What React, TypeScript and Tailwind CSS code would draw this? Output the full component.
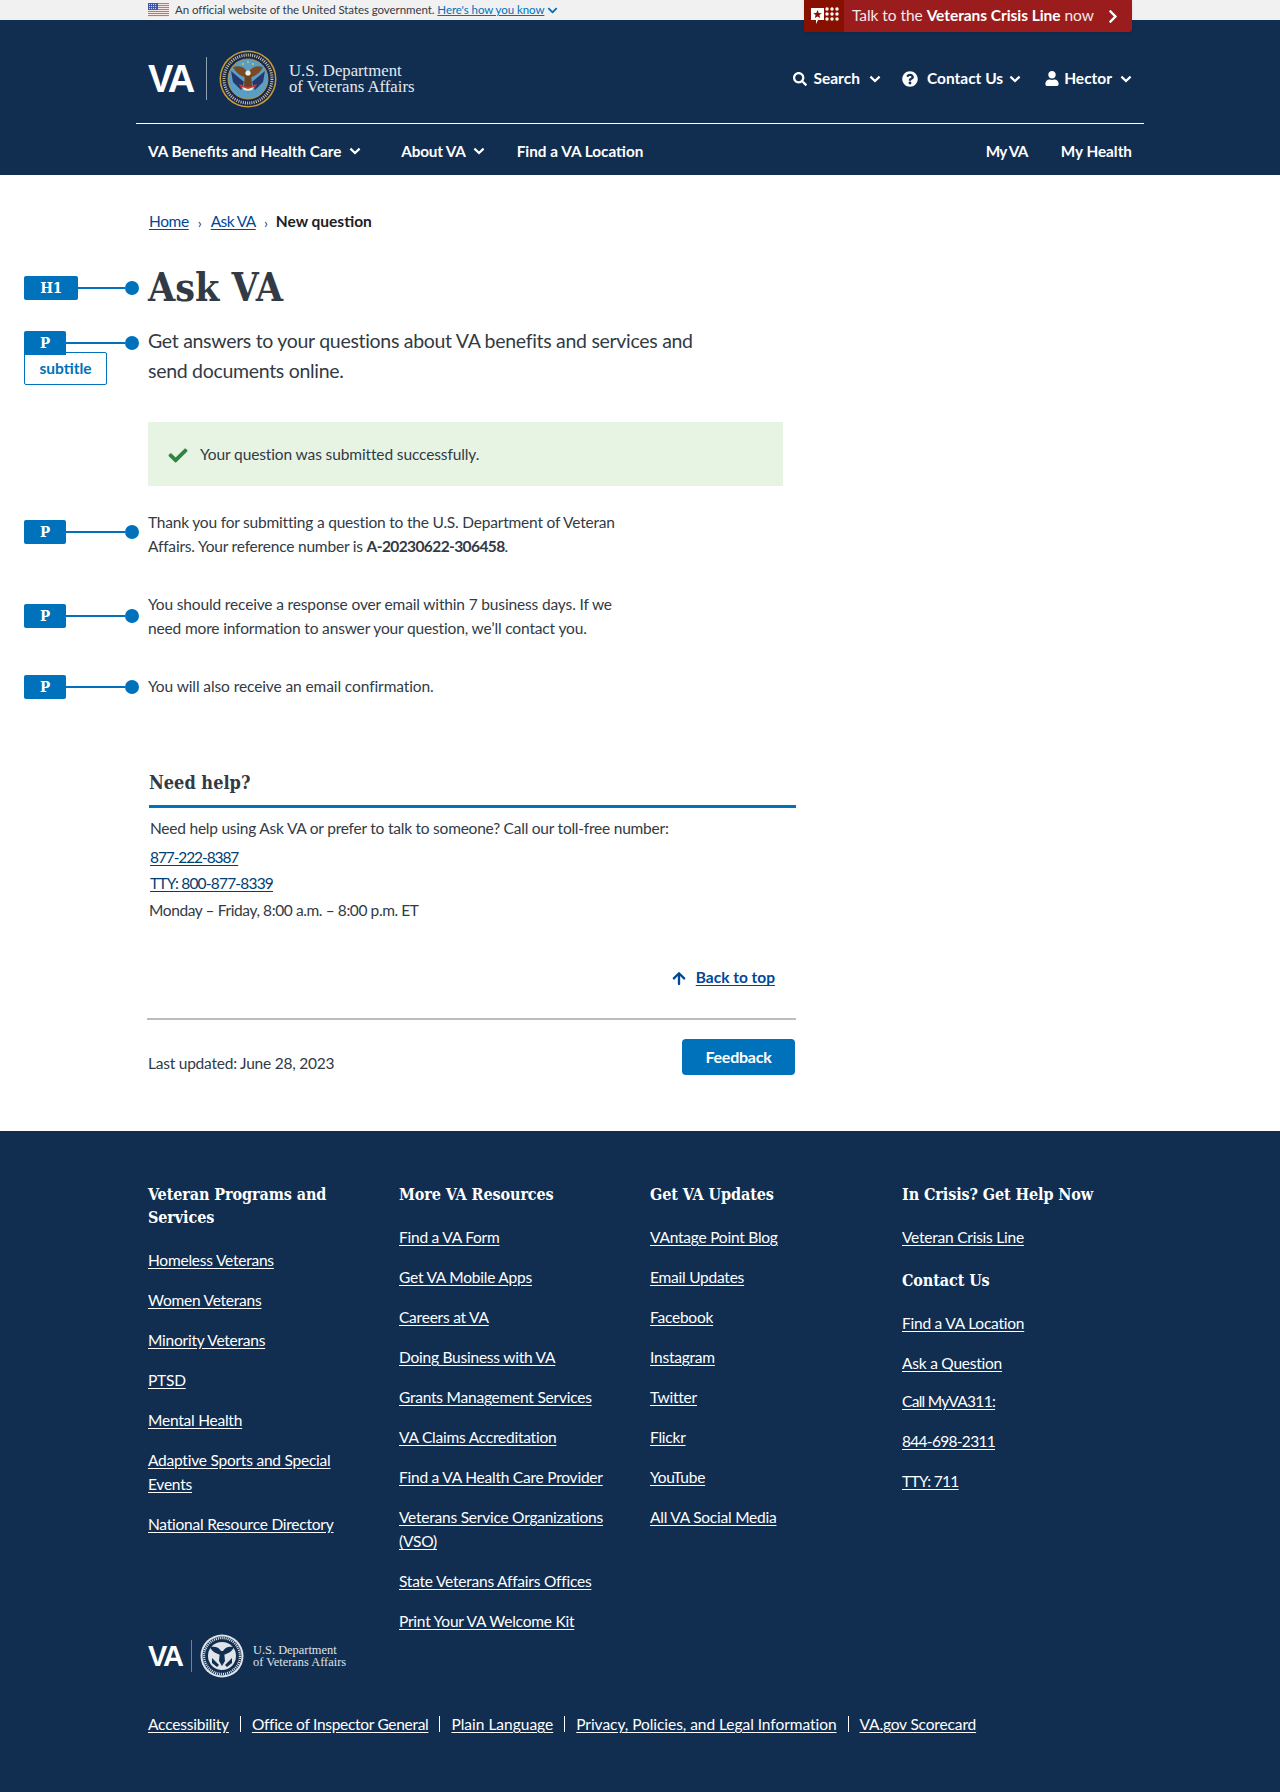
import React from "react";
import { FaChevronDown, FaChevronRight, FaQuestionCircle, FaUser, FaCheck, FaSearch, FaArrowUp } from "react-icons/fa";

const sans = "font-['Lato','Liberation_Sans',sans-serif]";
const serif = "font-['DejaVu_Serif_Condensed','DejaVu_Serif',serif]";

function Flag() {
  return (
    <svg width="21" height="14" viewBox="0 0 21 14" className="block">
      <rect width="21" height="14" fill="#f4f4f4" />
      {[0, 2, 4, 6, 8, 10, 12].map((y) => (
        <rect key={y} y={y} width="21" height="1.1" fill="#e8694f" />
      ))}
      <rect width="10" height="7" fill="#3f57a6" />
      {[1.5, 3.5, 5.5].map((y) =>
        [1.5, 3.5, 5.5, 7.5].map((x) => <circle key={x + "-" + y} cx={x} cy={y} r="0.5" fill="#fff" />)
      )}
    </svg>
  );
}

function Seal({ size }: { size: number }) {
  return (
    <svg width={size} height={size} viewBox="0 0 58 58" className="block shrink-0">
      <circle cx="29" cy="29" r="28.5" fill="#c79a35" />
      <circle cx="29" cy="29" r="27" fill="#1b2a4c" />
      <circle cx="29" cy="29" r="20" fill="#5b9ec4" stroke="#c79a35" strokeWidth="0.8" />
      <path d="M14 32 L12 21 L25 32 L22 40 Z" fill="#24386e" />
      <path d="M44 32 L46 21 L33 32 L36 40 Z" fill="#24386e" />
      <path d="M28 28 C24 27 17 24 14 17 C20 15 26 17 28 22 Z" fill="#7a4a24" />
      <path d="M30 28 C34 27 41 24 44 17 C38 15 32 17 30 22 Z" fill="#7a4a24" />
      <path d="M26 24 L32 24 L33 36 L29 42 L25 36 Z" fill="#6d4220" />
      <circle cx="29" cy="23" r="2.6" fill="#f1efe6" />
      <path d="M20 34 L29 37 L38 34 L36 38 L29 40 L22 38 Z" fill="#c23b35" />
      <path d="M23 37 L29 39 L35 37 L33 40 L29 41 L25 40 Z" fill="#f1efe6" />
      <circle cx="24" cy="14" r="1" fill="#e2c14e" />
      <circle cx="29" cy="12" r="1" fill="#e2c14e" />
      <circle cx="34" cy="14" r="1" fill="#e2c14e" />
      <circle cx="29" cy="29" r="24" fill="none" stroke="#c9c3a8" strokeWidth="3" strokeDasharray="1 1.2" />
    </svg>
  );
}

function WhiteSeal({ size }: { size: number }) {
  return (
    <svg width={size} height={size} viewBox="0 0 44 44" className="block shrink-0">
      <circle cx="22" cy="22" r="21.5" fill="#dfe4ea" />
      <circle cx="22" cy="22" r="19.5" fill="#112e51" />
      <circle cx="22" cy="22" r="18" fill="none" stroke="#dfe4ea" strokeWidth="2.4" strokeDasharray="1 1" />
      <circle cx="22" cy="22" r="14" fill="#dfe4ea" />
      <path d="M21 21 C17 20 12 18 10 13 C15 12 19 13 21 17 Z" fill="#112e51" />
      <path d="M23 21 C27 20 32 18 34 13 C29 12 25 13 23 17 Z" fill="#112e51" />
      <path d="M20 17 L24 17 L25 27 L22 32 L19 27 Z" fill="#112e51" />
      <path d="M12 24 L19 31 L17 33 L12 29 Z" fill="#112e51" />
      <path d="M32 24 L25 31 L27 33 L32 29 Z" fill="#112e51" />
    </svg>
  );
}

function Logo({ small }: { small?: boolean }) {
  if (small) {
    return (
      <div className="flex items-center h-[44px]">
        <span className="font-['Liberation_Sans',sans-serif] font-bold text-[29px] tracking-[-2.2px] text-white leading-none w-[35px]">VA</span>
        <span className="w-px h-[32px] bg-[#6f8298] ml-[8px] mr-[8px]" />
        <WhiteSeal size={44} />
        <div className="ml-[9px] font-['Liberation_Serif',serif] text-[12.4px] tracking-normal leading-[12px] text-[#dfe4ea]">
          <div>U.S. Department</div>
          <div>of Veterans Affairs</div>
        </div>
      </div>
    );
  }
  return (
    <div className="flex items-center h-[58px]">
      <span className="font-['Liberation_Sans',sans-serif] font-bold text-[38px] tracking-[-2.8px] text-white leading-none w-[48px]">VA</span>
      <span className="w-px h-[43px] bg-[#8fa0b3] ml-[10px] mr-[12px]" />
      <Seal size={58} />
      <div className="ml-[12px] font-['Liberation_Serif',serif] text-[16.7px] tracking-normal leading-[16px] text-[#e6e9ee]">
        <div>U.S. Department</div>
        <div>of Veterans Affairs</div>
      </div>
    </div>
  );
}

function CrisisIcon() {
  return (
    <svg width="29" height="18" viewBox="0 0 29 18" className="block">
      <path d="M1 1 H14 V13 H8 L6 17 V13 H1 Z" fill="#fff" />
      <path d="M7.5 3 L8.7 6 L11.8 6.2 L9.4 8.1 L10.2 11 L7.5 9.4 L4.8 11 L5.6 8.1 L3.2 6.2 L6.3 6 Z" fill="#881000" />
      {[2, 7, 12].map((y) =>
        [17, 22, 27].map((x) => <circle key={x + "-" + y} cx={x} cy={y} r="1.7" fill="#fff" />)
      )}
    </svg>
  );
}

function Chevron({ className = "" }: { className?: string }) {
  return (
    <svg width="12" height="8" viewBox="0 0 12 8" className={"block " + className}>
      <path d="M1.4 1.6 L6 6 L10.6 1.6" fill="none" stroke="currentColor" strokeWidth="2.2" />
    </svg>
  );
}

function Tag({ label, sub, dotTop }: { label: string; sub?: string; dotTop: number }) {
  const wide = label === "H1";
  return (
    <div className="absolute left-[-124px] w-[115px]" style={{ top: dotTop - 12 }}>
      <div className="flex items-center h-[24px]">
        <span
          className={
            "h-[24px] flex items-center justify-center bg-[#0071bb] text-white font-bold text-[15px] rounded-t-[2px] " +
            serif +
            " " +
            (wide ? "w-[54px] rounded-b-[2px]" : sub ? "w-[42px]" : "w-[42px] rounded-b-[2px]")
          }
        >
          {label}
        </span>
        <span className="flex-1 h-[2px] bg-[#0071bb]" />
        <span className="w-[14px] h-[14px] rounded-full bg-[#0071bb]" />
      </div>
      {sub && (
        <div className="mt-[-3px] w-[83px] h-[33px] border border-[#0071bb] bg-white rounded-[2px] flex items-center justify-center text-[#0071bb] font-bold text-[15.5px] tracking-normal">
          {sub}
        </div>
      )}
    </div>
  );
}

function FooterCol({ title, links }: { title: string; links: string[] }) {
  return (
    <div>
      <h2 className={"text-[16px] tracking-[-0.1px] font-bold leading-[23px] text-white mb-[19px] " + serif}>{title}</h2>
      <ul className="flex flex-col gap-[16px]">
        {links.map((l) => (
          <li key={l} className="leading-[24px]">
            <a className="underline underline-offset-[2px] text-white">{l}</a>
          </li>
        ))}
      </ul>
    </div>
  );
}

const bottomLinks = [
  { text: "Accessibility", cls: "tracking-[-0.2px]" },
  { text: "Office of Inspector General", cls: "tracking-[-0.3px]" },
  { text: "Plain Language", cls: "tracking-[0px]" },
  { text: "Privacy, Policies, and Legal Information", cls: "tracking-[-0.05px]" },
  { text: "VA.gov Scorecard", cls: "tracking-[-0.15px]" },
];

export default function App() {
  return (
    <div className={"w-[1280px] h-[1792px] relative text-[15.5px] tracking-[-0.23px] bg-white text-[#323a45] overflow-hidden " + sans}>
      {/* Gov banner */}
      <div className="h-[20px] bg-[#f1f1f1]">
        <div className="ml-[148px] h-[20px] flex items-center text-[11.5px] tracking-[-0.07px] text-[#323a45]">
          <Flag />
          <span className="ml-[6px]">An official website of the United States government.</span>
          <a className="ml-[3px] text-[#0071bb] underline">Here's how you know</a>
          <FaChevronDown className="ml-[3px] text-[#0071bb] w-[11px] h-[11px]" />
        </div>
      </div>

      {/* Crisis line */}
      <div className="absolute left-[804px] top-0 w-[328px] h-[32px] bg-[#9b1c1c] rounded-b-[3px] flex items-center text-white shadow-sm overflow-hidden">
        <div className="w-[40px] h-full bg-[#881000] flex items-center justify-center">
          <CrisisIcon />
        </div>
        <div className="ml-[8px] text-[15.5px] tracking-[-0.05px] text-[#f5e8e8]">
          Talk to the <b className="text-white">Veterans Crisis Line</b> now
        </div>
        <FaChevronRight className="absolute right-[12px] w-[14px] h-[15px]" />
      </div>

      {/* Header */}
      <header className="h-[155px] bg-[#112e51] text-white">
        <div className="w-[1008px] ml-[136px] h-[104px] border-b border-white flex items-center justify-between pl-[12px] pr-[12px] pt-[14px]">
          <Logo />
          <div className="flex items-center font-bold text-[15.5px] tracking-normal">
            <FaSearch className="w-[14px] h-[14px] mr-[6px]" />
            <span>Search</span>
            <Chevron className="ml-[9px]" />
            <FaQuestionCircle className="w-[16px] h-[16px] ml-[21px] mr-[9px]" />
            <span>Contact Us</span>
            <Chevron className="ml-[6px]" />
            <FaUser className="w-[14px] h-[15px] ml-[24px] mr-[5px]" />
            <span>Hector</span>
            <Chevron className="ml-[8px]" />
          </div>
        </div>
        <nav className="ml-[148px] w-[984px] h-[51px] pt-[3px] flex items-center font-bold text-[15.3px] tracking-normal">
          <span>VA Benefits and Health Care</span>
          <Chevron className="ml-[8px]" />
          <span className="ml-[40px] tracking-[-0.2px]">About VA</span>
          <Chevron className="ml-[7px]" />
          <span className="ml-[32px]">Find a VA Location</span>
          <span className="ml-auto tracking-[-0.7px]">My VA</span>
          <span className="ml-[33px]">My Health</span>
        </nav>
      </header>

      {/* Main */}
      <main className="ml-[148px] w-[648px] h-[956px] relative">
        <div className="pt-[35px] h-[59px] flex items-center text-[15.5px]">
          <a className="ml-[1px] text-[#004795] underline underline-offset-2 tracking-[-0.4px]">Home</a>
          <span className="w-[22px] text-center text-[#004795] text-[14px]">›</span>
          <a className="text-[#004795] underline underline-offset-2 tracking-[-0.6px]">Ask VA</a>
          <span className="w-[20px] text-center text-[#004795] text-[14px]">›</span>
          <b className="text-[#212121] tracking-normal">New question</b>
        </div>

        <div className="relative mt-[29px]">
          <Tag label="H1" dotTop={25} />
          <h1 className={"text-[39px] font-bold leading-[48px] text-[#323a45] tracking-normal " + serif}>Ask VA</h1>
        </div>

        <div className="relative mt-[15px]">
          <Tag label="P" sub="subtitle" dotTop={17} />
          <p className="text-[19.5px] tracking-[-0.3px] leading-[30px] w-[580px]">
            Get answers to your questions about VA benefits and services and send documents online.
          </p>
        </div>

        <div className="mt-[36px] w-[635px] h-[64px] pt-[2px] bg-[#e7f4e4] flex items-center pl-[19px] text-[15.5px] tracking-[-0.12px]">
          <FaCheck className="w-[22px] h-[19px] text-[#2e8540]" />
          <span className="ml-[11px]">Your question was submitted successfully.</span>
        </div>

        <div className="relative mt-[24px]">
          <Tag label="P" dotTop={22} />
          <p className="leading-[24px] w-[480px] tracking-[-0.2px]">
            Thank you for submitting a question to the U.S. Department of Veteran Affairs. Your reference number is{" "}
            <b className="tracking-[-0.6px]">A-20230622-306458</b>.
          </p>
        </div>

        <div className="relative mt-[34px]">
          <Tag label="P" dotTop={24} />
          <p className="leading-[24px] w-[480px] tracking-[-0.15px]">
            You should receive a response over email within 7 business days. If we need more information to answer your question, we’ll contact you.
          </p>
        </div>

        <div className="relative mt-[34px]">
          <Tag label="P" dotTop={13} />
          <p className="leading-[24px] tracking-[-0.1px]">You will also receive an email confirmation.</p>
        </div>

        <div className="ml-[1px] mt-[72px] w-[647px]">
          <h2 className={"text-[18px] tracking-normal font-bold leading-[26px] pb-[9px] " + serif}>Need help?</h2>
          <div className="h-[3px] bg-[#0071bb]" />
          <div className="mt-[8px] leading-[24px]">
            <p className="ml-[1px]">Need help using Ask VA or prefer to talk to someone? Call our toll-free number:</p>
            <p className="ml-[1px] mt-[5px]"><a className="text-[#003e73] underline underline-offset-2 tracking-[-1.1px]">877-222-8387</a></p>
            <p className="ml-[1px] mt-[2px]"><a className="text-[#003e73] underline underline-offset-2 tracking-[-0.8px]">TTY: 800-877-8339</a></p>
            <p className="mt-[3px] tracking-[-0.4px]">Monday – Friday, 8:00 a.m. – 8:00 p.m. ET</p>
          </div>
        </div>

        <div className="mt-[44px] h-[24px] flex items-center justify-end pr-[21px] text-[#004795] font-bold text-[15.5px] tracking-normal">
          <FaArrowUp className="w-[14px] h-[15px] mr-[10px]" />
          <a className="underline underline-offset-2">Back to top</a>
        </div>

        <div className="mt-[28px] ml-[-1px] h-[2px] bg-[#bcbcc0]" />

        <div className="mt-[18px] flex items-center justify-between">
          <span className="mt-[14px]">Last updated: June 28, 2023</span>
          <button className="w-[113px] h-[36px] rounded-[4px] bg-[#0071bb] text-white font-bold text-[16px] mr-[1px]">Feedback</button>
        </div>
      </main>

      {/* Footer */}
      <footer className="h-[661px] bg-[#112e51] text-white">
        <div className="ml-[148px] h-[503px] pt-[52px] grid grid-cols-[251px_251px_252px_240px]">
          <div className="w-[195px]">
            <FooterCol
              title="Veteran Programs and Services"
              links={["Homeless Veterans", "Women Veterans", "Minority Veterans", "PTSD", "Mental Health", "Adaptive Sports and Special Events", "National Resource Directory"]}
            />
          </div>
          <div className="w-[220px]">
            <FooterCol
              title="More VA Resources"
              links={["Find a VA Form", "Get VA Mobile Apps", "Careers at VA", "Doing Business with VA", "Grants Management Services", "VA Claims Accreditation", "Find a VA Health Care Provider", "Veterans Service Organizations (VSO)", "State Veterans Affairs Offices", "Print Your VA Welcome Kit"]}
            />
          </div>
          <div>
            <FooterCol
              title="Get VA Updates"
              links={["VAntage Point Blog", "Email Updates", "Facebook", "Instagram", "Twitter", "Flickr", "YouTube", "All VA Social Media"]}
            />
          </div>
          <div>
            <FooterCol title="In Crisis? Get Help Now" links={["Veteran Crisis Line"]} />
            <div className="mt-[20px]">
              <FooterCol title="Contact Us" links={["Find a VA Location", "Ask a Question"]} />
            </div>
            <ul className="mt-[14px] flex flex-col gap-[16px] tracking-[-0.7px]">
              {["Call MyVA311:", "844-698-2311", "TTY: 711"].map((l) => (
                <li key={l} className="leading-[24px]"><a className="underline underline-offset-[2px]">{l}</a></li>
              ))}
            </ul>
          </div>
        </div>
        <div className="ml-[148px]"><Logo small /></div>
        <div className="ml-[148px] mt-[34px] flex items-center leading-[24px]">
          {bottomLinks.map((l, i) => (
            <React.Fragment key={l.text}>
              {i > 0 && <span className="mx-[11px] w-px h-[16px] bg-white" />}
              <a className={"underline underline-offset-[2px] " + l.cls}>{l.text}</a>
            </React.Fragment>
          ))}
        </div>
      </footer>
    </div>
  );
}
